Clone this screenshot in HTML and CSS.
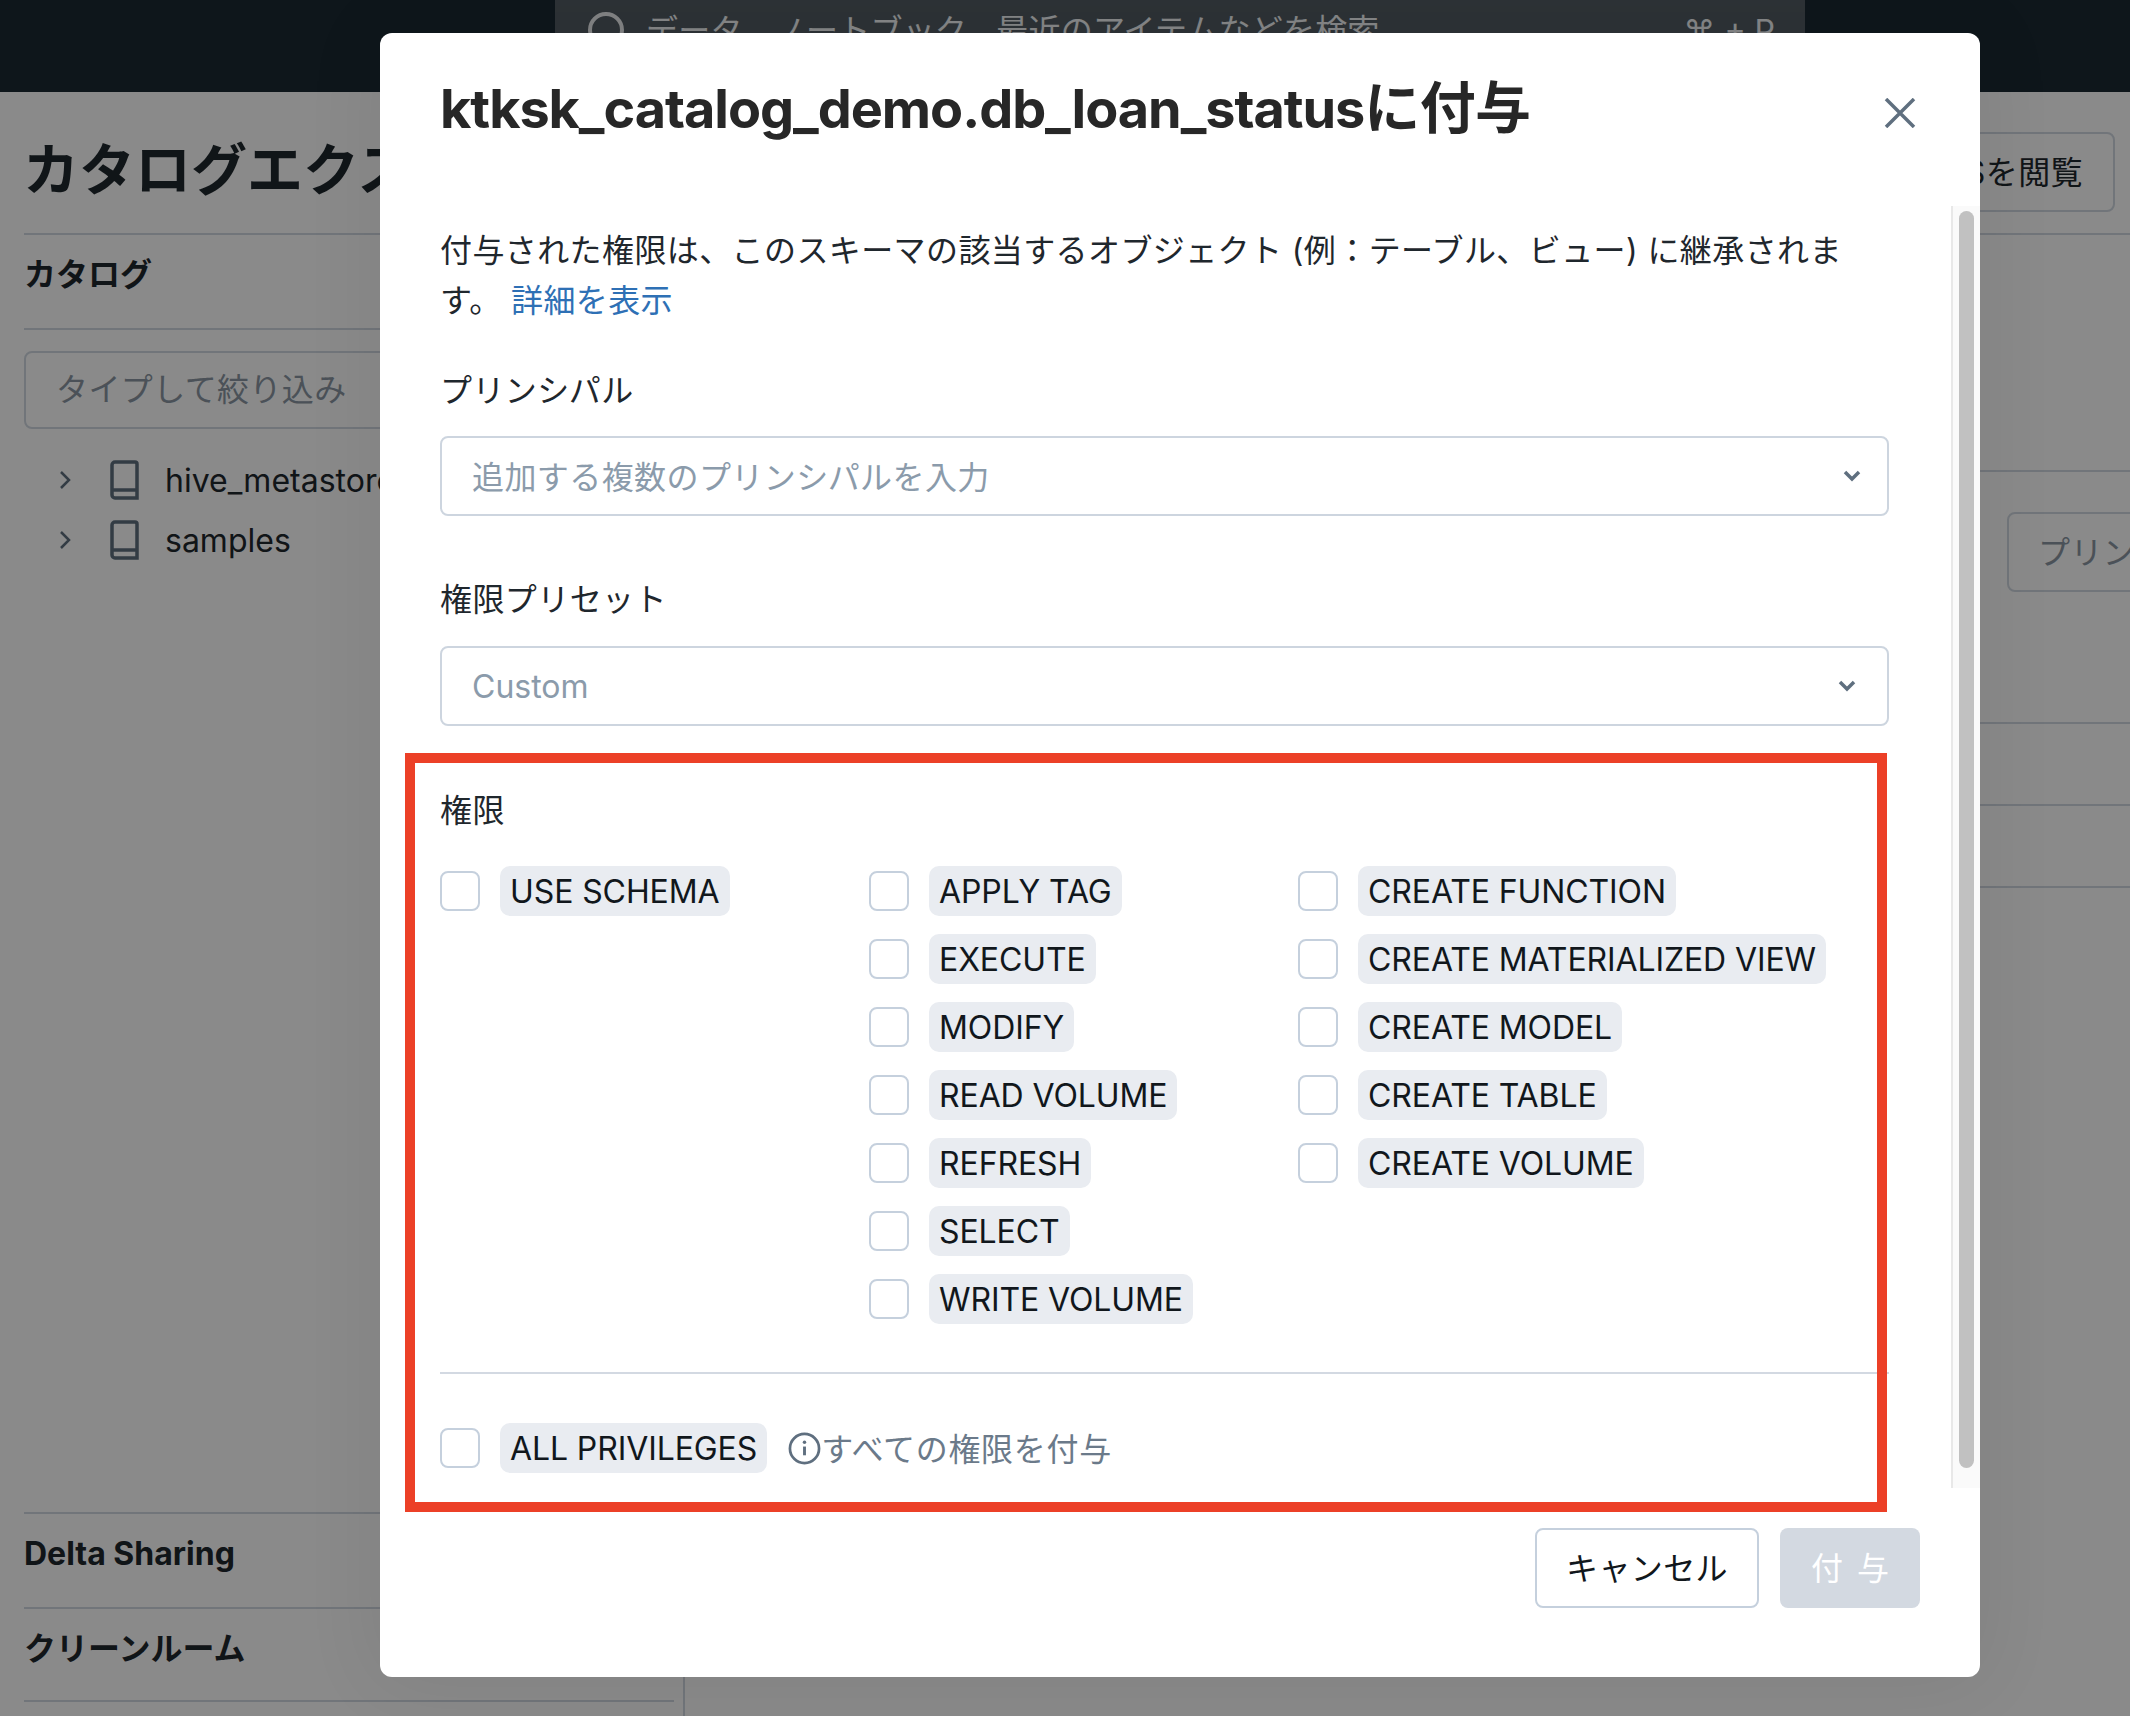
FILE: index.html
```html
<!DOCTYPE html>
<html lang="ja">
<head>
<meta charset="utf-8">
<title>カタログエクスプローラー</title>
<link rel="stylesheet" href="styles.css">
</head>
<body>
<div class="page">
  <header class="topbar">
    <div class="search">
      <svg class="search-icon" viewBox="0 0 40 40"><circle cx="20" cy="20" r="16"/><path d="M31 31l8 8"/></svg>
      <span class="search-text">データ、ノートブック、最近のアイテムなどを検索</span>
      <span class="search-key">⌘ + P</span>
    </div>
  </header>
  <div class="workspace">
    <aside class="sidebar">
      <h1 class="page-title">カタログエクスプローラー</h1>
      <h2 class="side-head first">カタログ</h2>
      <div class="filter">タイプして絞り込み</div>
      <ul class="tree">
        <li class="tree-item">
          <svg class="tree-chev" viewBox="0 0 12 20"><path d="M2 2l8 8-8 8"/></svg>
          <svg class="book" viewBox="0 0 30 40"><path d="M5 2h20a2 2 0 0 1 2 2v34H5a3 3 0 0 1-3-3V5a3 3 0 0 1 3-3z"/><path d="M2 30h25"/></svg>
          <span>hive_metastore</span>
        </li>
        <li class="tree-item">
          <svg class="tree-chev" viewBox="0 0 12 20"><path d="M2 2l8 8-8 8"/></svg>
          <svg class="book" viewBox="0 0 30 40"><path d="M5 2h20a2 2 0 0 1 2 2v34H5a3 3 0 0 1-3-3V5a3 3 0 0 1 3-3z"/><path d="M2 30h25"/></svg>
          <span>samples</span>
        </li>
      </ul>
      <div class="side-foot">
        <h2 class="side-head">Delta Sharing</h2>
        <h2 class="side-head">クリーンルーム</h2>
      </div>
    </aside>
    <main class="main">
      <div class="main-top"><button class="ghost-btn">DBFSを閲覧</button></div>
      <div class="main-tabs"></div>
      <div class="main-tools"><button class="ghost-btn tool">プリンシパル</button></div>
      <div class="main-row"></div>
      <div class="main-row"></div>
    </main>
  </div>
  <div class="overlay"></div>

  <section class="modal">
    <header class="modal-head">
      <h2 class="modal-title">ktksk_catalog_demo.db_loan_status<span class="title-cjk">に付与</span></h2>
      <svg class="close" viewBox="0 0 32 30"><path d="M2 1l28 28M30 1L2 29"/></svg>
    </header>
    <div class="modal-body">
      <div class="modal-content">
        <p class="intro">付与された権限は、このスキーマの該当するオブジェクト (例：テーブル、ビュー) に継承されます。 <a class="link">詳細を表示</a></p>
        <div class="label">プリンシパル</div>
        <div class="select placeholder">
          <span class="select-text">追加する複数のプリンシパルを入力</span>
          <svg class="chev" viewBox="0 0 18 12"><path d="M2 2l7 7 7-7"/></svg>
        </div>
        <div class="label preset">権限プリセット</div>
        <div class="select placeholder custom">
          <span>Custom</span>
          <svg class="chev" viewBox="0 0 18 12"><path d="M2 2l7 7 7-7"/></svg>
        </div>
        <div class="label perms">権限</div>
        <div class="perm-grid">
          <div class="perm-col">
            <label class="perm"><i class="box"></i><span class="chip">USE SCHEMA</span></label>
          </div>
          <div class="perm-col">
            <label class="perm"><i class="box"></i><span class="chip">APPLY TAG</span></label>
            <label class="perm"><i class="box"></i><span class="chip">EXECUTE</span></label>
            <label class="perm"><i class="box"></i><span class="chip">MODIFY</span></label>
            <label class="perm"><i class="box"></i><span class="chip">READ VOLUME</span></label>
            <label class="perm"><i class="box"></i><span class="chip">REFRESH</span></label>
            <label class="perm"><i class="box"></i><span class="chip">SELECT</span></label>
            <label class="perm"><i class="box"></i><span class="chip">WRITE VOLUME</span></label>
          </div>
          <div class="perm-col">
            <label class="perm"><i class="box"></i><span class="chip">CREATE FUNCTION</span></label>
            <label class="perm"><i class="box"></i><span class="chip">CREATE MATERIALIZED VIEW</span></label>
            <label class="perm"><i class="box"></i><span class="chip">CREATE MODEL</span></label>
            <label class="perm"><i class="box"></i><span class="chip">CREATE TABLE</span></label>
            <label class="perm"><i class="box"></i><span class="chip">CREATE VOLUME</span></label>
          </div>
        </div>
        <hr class="rule">
        <div class="perm all">
          <i class="box"></i><span class="chip">ALL PRIVILEGES</span>
          <svg class="info" viewBox="0 0 34 34"><circle cx="17" cy="17" r="15"/><path class="info-stem" d="M17 15v9"/><circle class="info-dot" cx="17" cy="10.5" r="1.8"/></svg>
          <span class="all-note">すべての権限を付与</span>
        </div>
      </div>
      <div class="scroll-track"><div class="scroll-thumb"></div></div>
    </div>
    <footer class="modal-foot">
      <button class="btn cancel">キャンセル</button>
      <button class="btn grant">付与</button>
    </footer>
    <div class="highlight"></div>
  </section>
</div>
</body>
</html>
```
FILE: styles.css
```css
* { box-sizing: border-box; }
html, body { margin: 0; padding: 0; }
body {
  font-family: Inter, "Noto Sans CJK JP", sans-serif;
  font-size: 32px;
  color: #1f272d;
  background: #fff;
}
h1, h2, p, ul { margin: 0; padding: 0; }
ul { list-style: none; }
button { font: inherit; }

.page {
  position: relative;
  width: 2130px;
  height: 1716px;
  overflow: hidden;
  display: flex;
  flex-direction: column;
}

/* top bar */
.topbar {
  height: 92px;
  flex: none;
  background: #1b2a32;
  padding-left: 555px;
}
.search {
  width: 1250px;
  height: 92px;
  background: #535d64;
  display: flex;
  align-items: flex-start;
  padding: 10px 30px 0 31px;
  color: #f5f8fa;
}
.search-icon { width: 40px; height: 40px; flex: none; margin-top: 0; fill: none; stroke: #f0f2f4; stroke-width: 4; }
.search-text { margin-left: 20px; line-height: 42px; letter-spacing: 0.2px; }
.search-key { margin-left: auto; line-height: 44px; }

/* page behind */
.workspace { flex: 1; display: flex; min-height: 0; }
.sidebar {
  width: 685px;
  flex: none;
  border-right: 2px solid #d1d9e1;
  padding: 0 9px 0 24px;
  display: flex;
  flex-direction: column;
}
.page-title {
  height: 141px;
  flex: none;
  padding-top: 44px;
  margin-left: -1px;
  font-size: 56px;
  line-height: 68px;
  font-weight: 700;
  white-space: nowrap;
}
.side-head {
  font-size: 32px;
  font-weight: 700;
  border-top: 2px solid #d1d9e1;
  height: 95px;
  padding-top: 16px;
  line-height: 48px;
}
.side-head.first { border-bottom: 2px solid #d1d9e1; height: 97px; }
.filter {
  margin-top: 21px;
  height: 78px;
  border: 2px solid #d1d9e1;
  border-radius: 8px;
  padding: 0 30px;
  line-height: 74px;
  letter-spacing: 0.4px;
  color: #8b97a3;
}
.tree { margin-top: 21px; padding-left: 35px; }
.tree-item { height: 60px; display: flex; align-items: center; }
.tree-chev { width: 12px; height: 20px; flex: none; fill: none; stroke: #5f6f7f; stroke-width: 2.5; }
.book { width: 30px; height: 40px; flex: none; margin: 0 25px 0 39px; fill: none; stroke: #5f6f7f; stroke-width: 3.5; }
.side-foot { margin-top: auto; margin-bottom: 14px; }
.side-foot .side-head:last-child { border-bottom: 2px solid #d1d9e1; }

.main { flex: 1; min-width: 0; }
.main-top {
  height: 143px;
  border-bottom: 2px solid #d1d9e1;
  display: flex;
  justify-content: flex-end;
  align-items: flex-start;
  padding: 40px 15px 0 0;
}
.ghost-btn {
  height: 80px;
  padding: 0 30px 4px;
  background: #fff;
  border: 2px solid #d1d9e1;
  border-radius: 8px;
  color: #1f272d;
  white-space: nowrap;
  letter-spacing: 0.4px;
}
.main-tabs { height: 237px; border-bottom: 2px solid #d1d9e1; }
.main-tools {
  height: 252px;
  border-bottom: 2px solid #d1d9e1;
  display: flex;
  justify-content: flex-start;
  align-items: flex-start;
  padding: 40px 0 0 1322px;
}
.tool { color: #8b97a3; flex: none; padding-left: 29px; }
.main-row { height: 82px; border-bottom: 2px solid #d1d9e1; }

.overlay {
  position: absolute;
  inset: 0;
  background: rgba(0, 0, 0, 0.46);
}

/* modal */
.modal {
  position: absolute;
  left: 380px;
  top: 33px;
  width: 1600px;
  height: 1644px;
  background: #fff;
  border-radius: 12px;
  box-shadow: 0 0 80px rgba(0, 0, 0, 0.08);
  display: flex;
  flex-direction: column;
  overflow: hidden;
}
.modal-head {
  height: 173px;
  flex: none;
  display: flex;
  align-items: flex-start;
  justify-content: space-between;
  padding: 37px 64px 0 60px;
}
.modal-title {
  font-size: 54px;
  line-height: 76px;
  font-weight: 700;
  letter-spacing: -1.05px;
  color: #272727;
  white-space: nowrap;
}
.title-cjk { font-size: 56px; letter-spacing: -0.6px; }
.close { width: 32px; height: 30px; margin-top: 28px; fill: none; stroke: #5f6f7f; stroke-width: 3.5; }

.modal-body { flex: 1; min-height: 0; display: flex; }
.modal-content { flex: 1; min-width: 0; padding: 20px 62px 0 60px; }
.intro { line-height: 50px; color: #1f272d; letter-spacing: 0.4px; }
.link { color: #2e70b5; }
.label { line-height: 50px; margin-top: 40px; color: #1f272d; letter-spacing: 0.42px; }
.label.preset { margin-top: 59px; }
.label.perms { margin-top: 60px; }
.select {
  margin-top: 20px;
  height: 80px;
  border: 2px solid #cdd5df;
  border-radius: 8px;
  display: flex;
  align-items: center;
  justify-content: space-between;
  padding: 0 26px 0 30px;
  color: #8b9bab;
}
.select-text { letter-spacing: 0.42px; margin-top: -3px; }
.select.custom { padding-right: 31px; margin-top: 21px; }
.chev { width: 18px; height: 12px; fill: none; stroke: #5f6f7f; stroke-width: 3.5; }

.perm-grid { margin-top: 30px; display: flex; }
.perm-col { width: 429px; flex: none; display: flex; flex-direction: column; gap: 18px; }
.perm { display: flex; align-items: center; height: 50px; }
.box {
  width: 40px;
  height: 40px;
  flex: none;
  border: 2px solid #c5d0dd;
  border-radius: 8px;
  margin-right: 20px;
}
.chip {
  height: 50px;
  line-height: 52px;
  padding: 0 10px;
  background: #e9ecf1;
  border-radius: 10px;
  color: #11171c;
  letter-spacing: -0.1px;
  white-space: nowrap;
}
.rule { border: 0; height: 2px; background: #d3d9e2; margin: 48px 0 49px; }
.info { width: 33px; height: 33px; flex: none; margin-left: 21px; fill: none; stroke: #5f6f7f; stroke-width: 2.8; }
.info-stem { stroke-width: 3; }
.info-dot { fill: #5f6f7f; stroke: none; }
.all-note { color: #6b7a8a; white-space: nowrap; letter-spacing: 0.7px; margin-top: -3px; }

.scroll-track {
  width: 29px;
  flex: none;
  background: #fafafa;
  border-left: 2px solid #e8e8e8;
  padding: 5px 6px 20px 6px;
}
.scroll-thumb { width: 15px; height: 100%; background: #c1c1c1; border-radius: 8px; }

.modal-foot {
  height: 189px;
  flex: none;
  display: flex;
  justify-content: flex-end;
  align-items: flex-start;
  gap: 21px;
  padding: 40px 60px 0 0;
}
.btn { height: 80px; border-radius: 8px; white-space: nowrap; padding-bottom: 6px; letter-spacing: 0.4px; }
.cancel { width: 224px; background: #fff; border: 2px solid #c5d0dd; color: #11171c; }
.grant { width: 140px; background: #d3d9e1; border: 0; color: #fff; letter-spacing: 14px; padding-left: 14px; padding-right: 0; }

.highlight {
  position: absolute;
  left: 25px;
  top: 720px;
  width: 1482px;
  height: 759px;
  border: 10px solid #ec4027;
  pointer-events: none;
}
```
